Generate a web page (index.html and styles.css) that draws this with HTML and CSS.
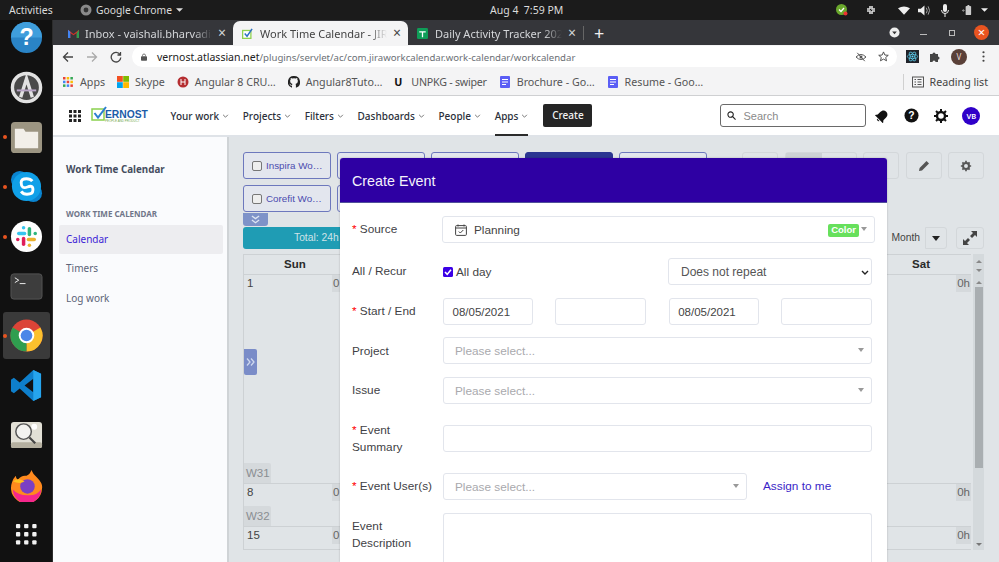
FILE: index.html
```html
<!DOCTYPE html>
<html lang="en">
<head>
<meta charset="utf-8">
<title>Work Time Calendar</title>
<link rel="stylesheet" href="styles.css">
</head>
<body>
<header class="topbar">
  <span class="activities">Activities</span>
  <span class="appmenu"><svg class="chrome-mono" viewBox="0 0 12 12"><circle cx="6" cy="6" r="5.5" fill="#8a8a8a"/><circle cx="6" cy="6" r="2.4" fill="#333"/></svg>Google Chrome<svg class="caret" viewBox="0 0 8 4"><path d="M0 0h8L4 4z" fill="#ddd"/></svg></span>
  <span class="clock">Aug 4&nbsp;&nbsp;7:59 PM</span>
  <span class="tray">
    <svg class="t1" viewBox="0 0 14 14"><circle cx="6.5" cy="6.5" r="5.5" fill="#6aa82c"/><path d="M4 6.5l2 2 3-3.500" stroke="#fff" fill="none" stroke-width="1.300"/><circle cx="10.500" cy="10.500" r="2" fill="#e33"/></svg>
    <svg class="t2" viewBox="0 0 12 12"><path d="M2 5h3M7 7h3M5 2v3M7 7v3M7 2v3h3M2 7h3v3" stroke="#ddd" stroke-width="1.600" fill="none"/></svg>
    <svg class="t3" viewBox="0 0 14 10"><path d="M0 2.500Q7-2 14 2.500L7 10z" fill="#eee"/></svg>
    <svg class="t4" viewBox="0 0 13 11"><path d="M0 3.500h3L7 0v11L3 7.500H0z" fill="#eee"/><path d="M9 2.500Q11 5.500 9 8.500M11 1Q14 5.500 11 10" stroke="#aaa" fill="none"/></svg>
    <svg class="t5" viewBox="0 0 8 13"><rect x="2" width="4" height="8" rx="2" fill="#eee"/><path d="M.5 6q0 3.500 3.500 3.500T7.500 6M4 9.500V13" stroke="#eee" fill="none"/></svg>
    <svg class="t6" viewBox="0 0 13 12"><rect x="5" y="1" width="6" height="10" rx="1" fill="#ccc"/><rect x="7" width="2" height="2" fill="#ccc"/><path d="M1 6h3M2.500 4.500v3" stroke="#888"/></svg>
    <svg class="t7" viewBox="0 0 8 4"><path d="M0 0h8L4 4z" fill="#eee"/></svg>
  </span>
</header>
<div class="desktop">
  <nav class="dock">
    <div class="dock-item"><svg viewBox="0 0 34 34"><circle cx="17" cy="17" r="16" fill="#2a84c6"/><path d="M1 17a16 16 0 0 1 32 0z" fill="#3f9edc"/><text x="17" y="25" class="dock-q">?</text></svg></div>
    <div class="dock-item"><svg viewBox="0 0 34 34"><circle cx="17" cy="17" r="14.500" fill="#4a4a4a" stroke="#e2e2e2" stroke-width="3.500"/><path d="M11 27L17 8l6 19" stroke="#e2e2e2" stroke-width="3.500" fill="none"/><path d="M7 20h20" stroke="#b9a5c7" stroke-width="2"/></svg></div>
    <div class="dock-item dot"><svg viewBox="0 0 34 34"><rect x="1" y="1" width="32" height="32" rx="4" fill="#9c9582"/><path d="M5 8h9l2 3h13v17H5z" fill="#f2efe9"/></svg></div>
    <div class="dock-item dot"><svg viewBox="0 0 34 34"><circle cx="10" cy="10" r="9" fill="#0a84d0"/><circle cx="24" cy="24" r="9" fill="#0a84d0"/><circle cx="17" cy="17" r="15" fill="#10a0e8"/><path d="M23 11.500q-2-2.500-6-2.500-5.500 0-5.500 4 0 7 6.500 4.500t5.500 4q0 3.500-6 3.500-4 0-6-3" stroke="#fff" stroke-width="3" fill="none"/></svg></div>
    <div class="dock-item dot"><svg viewBox="0 0 34 34"><circle cx="17" cy="17" r="16" fill="#fff"/><g stroke-width="3.600" stroke-linecap="round"><path d="M9 14h6" stroke="#36c5f0"/><path d="M14 8v0" stroke="#36c5f0"/><path d="M20 9v6" stroke="#2eb67d"/><path d="M26 14v0" stroke="#2eb67d"/><path d="M19 20h6" stroke="#ecb22e"/><path d="M20 26v0" stroke="#ecb22e"/><path d="M14 19v6" stroke="#e01e5a"/><path d="M8 20v0" stroke="#e01e5a"/></g></svg></div>
    <div class="dock-item"><svg viewBox="0 0 34 34"><rect x="1" y="4" width="32" height="26" rx="3" fill="#3d3d3d" stroke="#555"/><path d="M5 8l4 2.500-4 2.500" stroke="#eee" fill="none"/><path d="M10 14h6" stroke="#eee"/></svg></div>
    <div class="dock-item dock-active dot"><svg viewBox="0 0 34 34"><circle cx="17" cy="17" r="16.500" fill="#db4437"/><path d="M17 17L31.300 8.700A16.500 16.500 0 0 1 17 33.500z" fill="#fbc02d"/><path d="M17 17L17 33.500A16.500 16.500 0 0 1 2.700 8.700z" fill="#2f9e4f"/><circle cx="17" cy="17" r="8" fill="#fff"/><circle cx="17" cy="17" r="6" fill="#4a86e8"/></svg></div>
    <div class="dock-item"><svg viewBox="0 0 34 34"><path d="M24 1l8 4v24l-8 4-14-13-6 5-3-2v-12l3-2 6 5z" fill="#0e7fcb"/><path d="M24 10v14l-9-7z" fill="#111"/><path d="M24 1l8 4v24l-8 4z" fill="#26a5ee"/></svg></div>
    <div class="dock-item"><svg viewBox="0 0 34 34"><rect x="1" y="3" width="32" height="27" rx="3" fill="#e2e0d6"/><rect x="1" y="24" width="32" height="6" rx="2" fill="#b5b0a0"/><circle cx="14" cy="13" r="8" fill="#f3f3f0" stroke="#555" stroke-width="1.500"/><path d="M20 19l6 6" stroke="#444" stroke-width="2.200"/><circle cx="25" cy="8" r="3" fill="#fff"/></svg></div>
    <div class="dock-item"><svg viewBox="0 0 34 34"><path d="M22 1q2 5 6 8 6 6 5 11a16 16 0 1 1-31-6q1-4 4-7 0 3 2 4 4-5 9-4 4-2 5-6z" fill="#ff8a1e"/><path d="M3 21a14.500 14.500 0 0 0 29 0q-5 7-14 6-10 0-15-6z" fill="#f5278c"/><circle cx="18" cy="18" r="7.500" fill="#7b3fc4"/><path d="M3 13q5-5 12 0-5 3-12 0z" fill="#ffc21e"/></svg></div>
    <div class="dock-item"><svg class="dock-grid" viewBox="0 0 24 24"><g fill="#f2f2f2"><rect x="1" y="1" width="4.500" height="4.500" rx="1"/><rect x="9.500" y="1" width="4.500" height="4.500" rx="1"/><rect x="18" y="1" width="4.500" height="4.500" rx="1"/><rect x="1" y="9.500" width="4.500" height="4.500" rx="1"/><rect x="9.500" y="9.500" width="4.500" height="4.500" rx="1"/><rect x="18" y="9.500" width="4.500" height="4.500" rx="1"/><rect x="1" y="18" width="4.500" height="4.500" rx="1"/><rect x="9.500" y="18" width="4.500" height="4.500" rx="1"/><rect x="18" y="18" width="4.500" height="4.500" rx="1"/></g></svg></div>
  </nav>

  <div class="browser">
    <div class="tabstrip">
      <div class="tab tab-first"><svg class="tabicon" viewBox="0 0 12 10"><path d="M0 10V1l6 4.500L12 1v9h-2.500V4.500L6 7 2.500 4.500V10z" fill="#d93025"/><path d="M9.500 10V4.500L12 1v9z" fill="#2f9e4f"/><path d="M0 10V1l2.500 2v7z" fill="#4285f4"/></svg><span class="tabtitle">Inbox - vaishali.bharvadia</span><span class="tabx">×</span></div>
      <div class="tab tab-active"><svg class="tabicon" viewBox="0 0 12 12"><rect x=".7" y="2.700" width="9" height="8.600" fill="#fff" stroke="#8fd14f" stroke-width="1.400"/><path d="M3 6l2.500 3L11 1" stroke="#2d6fc4" stroke-width="1.600" fill="none"/></svg><span class="tabtitle">Work Time Calendar - JIRA</span><span class="tabx">×</span></div>
      <div class="tab"><svg class="tabicon" viewBox="0 0 12 12"><rect width="12" height="12" rx="1.500" fill="#0f9d58"/><path d="M2.500 3.500h7v1.400H6.700V10H5.300V4.900H2.500z" fill="#fff"/></svg><span class="tabtitle">Daily Activity Tracker 2021</span><span class="tabx">×</span></div>
      <span class="tabsep"></span>
      <span class="newtab">+</span>
      <span class="winbtns">
        <svg class="win-menu" viewBox="0 0 12 12"><circle cx="6" cy="6" r="5.500" fill="#eee"/><path d="M3.500 5h5L6 8z" fill="#333"/></svg>
        <span class="win-min"></span>
        <span class="win-max"></span>
        <span class="win-close">×</span>
      </span>
    </div>
    <div class="toolbar">
      <svg class="navbtn" viewBox="0 0 12 12"><path d="M11 6H2M6 1.500L1.500 6 6 10.500" stroke="#444" stroke-width="1.300" fill="none"/></svg>
      <svg class="navbtn" viewBox="0 0 12 12"><path d="M1 6h9M6 1.500L10.500 6 6 10.500" stroke="#aaa" stroke-width="1.300" fill="none"/></svg>
      <svg class="navbtn" viewBox="0 0 12 12"><path d="M10 3.500A4.800 4.800 0 1 0 10.800 6.500M10.500 1v3h-3" stroke="#444" stroke-width="1.300" fill="none"/></svg>
      <div class="omnibox">
        <svg class="lock" viewBox="0 0 8 10"><rect y="4" width="8" height="6" rx="1" fill="#555"/><path d="M2 4V3a2 2 0 0 1 4 0v1" stroke="#555" fill="none"/></svg>
        <span class="url"><b>vernost.atlassian.net</b>/plugins/servlet/ac/com.jiraworkcalendar.work-calendar/workcalendar</span>
        <svg class="omni-eye" viewBox="0 0 14 12"><path d="M1 6q6-6 12 0-6 6-12 0z" fill="none" stroke="#555" stroke-width="1.200"/><circle cx="7" cy="6" r="1.800" fill="#555"/><path d="M2.500 1l9 10" stroke="#555" stroke-width="1.200"/></svg>
        <svg class="omni-star" viewBox="0 0 12 12"><path d="M6 1l1.500 3.400 3.700.3-2.800 2.400.9 3.600L6 8.800l-3.300 1.900.9-3.600L.8 4.700l3.700-.3z" fill="none" stroke="#444"/></svg>
      </div>
      <svg class="ext-react" viewBox="0 0 14 14"><rect width="14" height="14" fill="#20232a"/><g fill="none" stroke="#61dafb" stroke-width=".7"><ellipse cx="7" cy="7" rx="5.500" ry="2.200"/><ellipse cx="7" cy="7" rx="5.500" ry="2.200" transform="rotate(60 7 7)"/><ellipse cx="7" cy="7" rx="5.500" ry="2.200" transform="rotate(120 7 7)"/></g><circle cx="7" cy="7" r="1.100" fill="#61dafb"/></svg>
      <svg class="ext-puzzle" viewBox="0 0 12 12"><path d="M1 3h2.500a1.500 1.500 0 0 1 3 0H9v2.500a1.500 1.500 0 0 1 0 3V11H6.500a1.500 1.500 0 0 0-3 0H1z" fill="#444"/></svg>
      <span class="avatar-v">V</span>
      <svg class="kebab" viewBox="0 0 3 13"><circle cx="1.500" cy="1.500" r="1.300" fill="#444"/><circle cx="1.500" cy="6.500" r="1.300" fill="#444"/><circle cx="1.500" cy="11.500" r="1.300" fill="#444"/></svg>
    </div>
    <div class="bookmarks">
      <span class="bm"><svg class="bm-ico" viewBox="0 0 10 10"><g><rect width="2.500" height="2.500" fill="#ea4335"/><rect x="3.700" width="2.500" height="2.500" fill="#fbbc05"/><rect x="7.400" width="2.500" height="2.500" fill="#34a853"/><rect y="3.700" width="2.500" height="2.500" fill="#4285f4"/><rect x="3.700" y="3.700" width="2.500" height="2.500" fill="#ea4335"/><rect x="7.400" y="3.700" width="2.500" height="2.500" fill="#fbbc05"/><rect y="7.400" width="2.500" height="2.500" fill="#34a853"/><rect x="3.700" y="7.400" width="2.500" height="2.500" fill="#4285f4"/><rect x="7.400" y="7.400" width="2.500" height="2.500" fill="#ea4335"/></g></svg>Apps</span>
      <span class="bm"><svg class="bm-ico bm-lg" viewBox="0 0 12 12"><rect width="5.800" height="5.800" fill="#f25022"/><rect x="6.200" width="5.800" height="5.800" fill="#7fba00"/><rect y="6.200" width="5.800" height="5.800" fill="#00a4ef"/><rect x="6.200" y="6.200" width="5.800" height="5.800" fill="#ffb900"/></svg>Skype</span>
      <span class="bm"><svg class="bm-ico bm-lg" viewBox="0 0 12 12"><circle cx="6" cy="6" r="5.500" fill="#b52e31"/><path d="M4 3v6M8 3v6M4 6h4" stroke="#fff"/></svg>Angular 8 CRU…</span>
      <span class="bm"><svg class="bm-ico bm-lg" viewBox="0 0 12 12"><path d="M6 0a6 6 0 0 0-2 11.700V9.500Q2.500 10 2 8.700 1.800 8 1.200 7.700 2 7.400 2.600 8.400q.6.800 1.500.4 0-.6.400-.9-2.400-.3-2.400-2.900 0-1 .6-1.600-.2-.8.100-1.500.7-.1 1.700.6a5 5 0 0 1 3 0q1-.7 1.700-.6.300.7.100 1.500.6.600.6 1.600 0 2.600-2.400 2.900.4.400.4 1.100v2.700A6 6 0 0 0 6 0z" fill="#222"/></svg>Angular8Tuto…</span>
      <span class="bm bm-tight"><b class="bm-u">U</b>UNPKG - swiper</span>
      <span class="bm"><svg class="bm-ico bm-lg" viewBox="0 0 12 12"><rect x="1" width="10" height="12" rx="1" fill="#5b5ef5"/><path d="M3 3.500h6M3 6h6M3 8.500h4" stroke="#fff"/></svg>Brochure - Go…</span>
      <span class="bm"><svg class="bm-ico bm-lg" viewBox="0 0 12 12"><rect x="1" width="10" height="12" rx="1" fill="#5b5ef5"/><path d="M3 3.500h6M3 6h6M3 8.500h4" stroke="#fff"/></svg>Resume - Goo…</span>
      <span class="readlist"><svg class="bm-ico bm-lg" viewBox="0 0 12 12"><rect x=".5" y="1" width="11" height="10" fill="none" stroke="#555"/><path d="M2.500 3.500h1.500M2.500 6h1.500M2.500 8.500h1.500M5.500 3.500h4M5.500 6h4M5.500 8.500h4" stroke="#555"/></svg>Reading list</span>
    </div>

    <div class="page">
      <div class="jiranav">
        <svg class="nav-grid" viewBox="0 0 12 12"><g fill="#222"><rect width="3" height="3"/><rect x="4.500" width="3" height="3"/><rect x="9" width="3" height="3"/><rect y="4.500" width="3" height="3"/><rect x="4.500" y="4.500" width="3" height="3"/><rect x="9" y="4.500" width="3" height="3"/><rect y="9" width="3" height="3"/><rect x="4.500" y="9" width="3" height="3"/><rect x="9" y="9" width="3" height="3"/></g></svg>
        <span class="logo"><svg class="logo-check" viewBox="0 0 16 15"><rect x="1" y="3" width="12" height="11" fill="#fff" stroke="#8bd14f" stroke-width="1.500"/><path d="M3.500 7l3.500 4.500L15 1" stroke="#2d7fd0" stroke-width="2" fill="none"/></svg><span class="logo-text"><b>ERNOST</b><i>PEOPLE AND PRODUCT</i></span></span>
        <span class="navlink">Your work<svg class="chev" viewBox="0 0 8 5"><path d="M1 1l3 3 3-3" stroke="#555" fill="none"/></svg></span>
        <span class="navlink">Projects<svg class="chev" viewBox="0 0 8 5"><path d="M1 1l3 3 3-3" stroke="#555" fill="none"/></svg></span>
        <span class="navlink">Filters<svg class="chev" viewBox="0 0 8 5"><path d="M1 1l3 3 3-3" stroke="#555" fill="none"/></svg></span>
        <span class="navlink">Dashboards<svg class="chev" viewBox="0 0 8 5"><path d="M1 1l3 3 3-3" stroke="#555" fill="none"/></svg></span>
        <span class="navlink">People<svg class="chev" viewBox="0 0 8 5"><path d="M1 1l3 3 3-3" stroke="#555" fill="none"/></svg></span>
        <span class="navlink navlink-active">Apps<svg class="chev" viewBox="0 0 8 5"><path d="M1 1l3 3 3-3" stroke="#555" fill="none"/></svg></span>
        <span class="createbtn">Create</span>
        <span class="searchbox"><svg class="search-ico" viewBox="0 0 10 10"><circle cx="4" cy="4" r="3" fill="none" stroke="#222" stroke-width="1.200"/><path d="M6.300 6.300L9.500 9.500" stroke="#222" stroke-width="1.300"/></svg>Search</span>
        <svg class="ni ni-bell" viewBox="0 0 14 14"><g transform="rotate(45 7 7)"><path d="M7 1C4.300 1 3 3.200 3 5.500V9L1 11.500h12L11 9V5.500C11 3.200 9.700 1 7 1z" fill="#111"/><path d="M5.300 12.300a1.800 1.800 0 0 0 3.400 0z" fill="#111"/></g></svg>
        <svg class="ni ni-help" viewBox="0 0 16 16"><circle cx="8" cy="8" r="7.500" fill="#111"/><text x="8" y="12" class="ni-q">?</text></svg>
        <svg class="ni ni-gear" viewBox="0 0 14 14"><circle cx="7" cy="7" r="4" fill="none" stroke="#111" stroke-width="2.400"/><g stroke="#111" stroke-width="2"><path d="M7 0v2.500M7 11.500V14M0 7h2.500M11.500 7H14M2 2l1.800 1.800M10.200 10.200L12 12M2 12l1.800-1.800M10.200 3.800L12 2"/></g></svg>
        <span class="ni-user">VB</span>
      </div>
      <div class="workspace">
        <aside class="sidebar">
          <div class="side-title">Work Time Calendar</div>
          <div class="side-head">WORK TIME CALENDAR</div>
          <div class="side-item side-item-active">Calendar</div>
          <div class="side-item">Timers</div>
          <div class="side-item">Log work</div>
        </aside>
        <main class="content">
          <div class="topcontrols">
            <div class="chips">
              <span class="chip"><i class="cb"></i>Inspira Wo…</span>
              <span class="chip"></span>
              <span class="chip"></span>
              <span class="chip chip-dark"></span>
              <span class="chip"></span>
              <span class="chip"><i class="cb"></i>Corefit Wo…</span>
              <span class="chip chip-narrow"></span>
            </div>
            <div class="tools">
              <span class="tool"></span>
              <span class="tool tool-split"><i></i><i></i></span>
              <span class="tool"></span>
              <span class="tool"><svg class="tool-ico" viewBox="0 0 12 12"><path d="M1 11l.6-3L8.500 1l2.500 2.500L4 10.400z" fill="#555"/></svg></span>
              <span class="tool"><svg class="tool-ico" viewBox="0 0 14 14"><circle cx="7" cy="7" r="3.500" fill="none" stroke="#555" stroke-width="2.400"/><g stroke="#555" stroke-width="2"><path d="M7 1v2M7 11v2M1 7h2M11 7h2M2.800 2.800l1.400 1.400M9.800 9.800l1.400 1.400M2.800 11.200l1.400-1.400M9.800 4.200l1.400-1.400"/></g></svg></span>
            </div>
          </div>
          <div class="expander"><svg class="exp-ico" viewBox="0 0 10 9"><path d="M1 .5l4 3 4-3M1 5l4 3 4-3" stroke="#dfe6f3" stroke-width="1.400" fill="none"/></svg></div>
          <div class="totalrow">
            <div class="totalbar">Total: 24h</div>
            <div class="viewsel"><span class="viewmonth">Month</span><span class="viewcaret"><i></i></span></div>
            <span class="fullscr"><svg class="full-ico" viewBox="0 0 16 16"><path d="M9 1h6v6l-2-2-3 3-2-2 3-3zM7 15H1V9l2 2 3-3 2 2-3 3z" fill="#444"/></svg></span>
          </div>
          <div class="calendar">
            <div class="cal-grid">
              <div class="cal-head"><span>Sun</span><span>Sat</span></div>
              <div class="week week-1"><div class="week-top"><span class="dnum">1</span><span class="hrs hrs-a">0</span><span class="hrs hrs-b">0h</span></div><span class="wk">W31</span></div>
              <div class="week week-2"><div class="week-top"><span class="dnum">8</span><span class="hrs hrs-a">0</span><span class="hrs hrs-b">0h</span></div><span class="wk">W32</span></div>
              <div class="week week-3"><div class="week-top"><span class="dnum">15</span><span class="hrs hrs-a">0</span><span class="hrs hrs-b">0h</span></div></div>
              <span class="sidepull"><svg class="pull-ico" viewBox="0 0 9 8"><path d="M1 .5L4 4 1 7.500M5 .5L8 4 5 7.500" stroke="#cfd8ee" stroke-width="1.300" fill="none"/></svg></span>
            </div>
            <div class="scrolltrack"><i class="sb-up"></i><i class="sb-down"></i><i class="sb-up sb-up2"></i><span class="thumb"></span><i class="sb-end"></i></div>
          </div>
        </main>
      </div>

      <section class="modal">
        <h2 class="modal-head">Create Event</h2>
        <form class="modal-form">
          <div class="row"><label class="lbl"><em>*</em> Source</label><div class="field fld-source"><svg class="cal-ico" viewBox="0 0 12 12"><rect x=".6" y="1.600" width="10.800" height="9.800" rx="1" fill="none" stroke="#444"/><path d="M.6 4h10.800M3 .5v2M9 .5v2" stroke="#444"/><path d="M3.800 7.500l1.500 1.500 3-3" stroke="#444" fill="none"/></svg>Planning<span class="colorpill">Color</span><i class="tri"></i></div></div>
          <div class="row row-all"><label class="lbl">All / Recur</label><div class="split"><span class="allday"><i class="check"><svg viewBox="0 0 10 10"><path d="M2 5l2.200 2.400L8 2.800" stroke="#fff" stroke-width="1.600" fill="none"/></svg></i>All day</span><div class="field fld-select">Does not repeat<svg class="selchev" viewBox="0 0 8 5"><path d="M1 1l3 3 3-3" stroke="#222" stroke-width="1.400" fill="none"/></svg></div></div></div>
          <div class="row"><label class="lbl"><em>*</em> Start / End</label><div class="dates"><div class="field fld-date">08/05/2021</div><div class="field"></div><div class="field fld-date">08/05/2021</div><div class="field"></div></div></div>
          <div class="row row-project"><label class="lbl">Project</label><div class="field fld-ph">Please select...<i class="tri"></i></div></div>
          <div class="row"><label class="lbl">Issue</label><div class="field fld-ph">Please select...<i class="tri"></i></div></div>
          <div class="row row-summary"><label class="lbl"><em>*</em> Event Summary</label><div class="field"></div></div>
          <div class="row row-users"><label class="lbl"><em>*</em> Event User(s)</label><div class="field fld-ph">Please select...<i class="tri"></i></div><a class="assign">Assign to me</a></div>
          <div class="row"><label class="lbl">Event Description</label><div class="field fld-area"></div></div>
        </form>
      </section>
    </div>
  </div>
</div>
</body>
</html>
```

FILE: styles.css
```css
* { box-sizing: border-box; }
html, body { margin: 0; width: 999px; height: 562px; overflow: hidden; }
body { font-family: "Noto Sans", sans-serif; background: #111; display: flex; flex-direction: column; }
svg { display: block; flex: none; }

/* GNOME top bar */
.topbar { height: 20px; background: #1b1b1b; color: #dcdcdc; font-size: 10.500px; display: flex; align-items: center; flex: none; position: relative; z-index: 2; }
.activities { margin-left: 9px; width: 71px; }
.appmenu { display: flex; align-items: center; font-size: 10.300px; }
.chrome-mono { width: 12px; height: 12px; margin-right: 4px; }
.caret { width: 7px; height: 4px; margin-left: 4px; }
.clock { position: absolute; left: 490px; top: 3px; line-height: 14px; }
.tray { margin-left: auto; display: flex; align-items: center; }
.t1 { width: 14px; height: 14px; }
.t2 { width: 12px; height: 12px; margin-left: 16px; }
.t3 { width: 12px; height: 9px; margin-left: 21px; }
.t4 { width: 12px; height: 11px; margin-left: 8px; }
.t5 { width: 8px; height: 13px; margin-left: 11px; }
.t6 { width: 12px; height: 11px; margin-left: 12px; }
.t7 { width: 7px; height: 4px; margin-left: 8px; margin-right: 11px; }

.desktop { flex: 1; display: flex; min-height: 0; }

/* Dock */
.dock { width: 53px; flex: none; background: #111; display: flex; flex-direction: column; align-items: center; border-right: 1px solid #2c2c2c; }
.dock-item { width: 47px; height: 49.700px; flex: none; display: flex; align-items: center; justify-content: center; position: relative; }
.dock-item:first-child { margin-top: -7px; }
.dock-item svg { width: 33px; height: 33px; }
.dock-item svg.dock-grid { width: 23px; height: 23px; }
.dock-active { background: #3a3a3a; border-radius: 3px; height: 47px; margin: 1.350px 0; }
.dot::before { content: ""; position: absolute; left: 0; top: 50%; margin-top: -2px; width: 4px; height: 4px; border-radius: 50%; background: #e95420; }
.dock-q { font: 700 24px "Liberation Sans", sans-serif; fill: #fff; text-anchor: middle; }

/* Browser chrome */
.browser { flex: 1; min-width: 0; display: flex; flex-direction: column; position: relative; }
.tabstrip { height: 25px; flex: none; background: #35363a; display: flex; align-items: flex-end; font-size: 11px; color: #d4d6d9; }
.tab { width: 175px; height: 24px; display: flex; align-items: center; padding: 0 4px 0 9px; flex: none; }
.tab-first { width: 180px; padding-left: 15px; }
.tab-first .tabicon { margin-right: 6px; }
.tab-active { background: #f4f4f5; color: #444; border-radius: 7px 7px 0 0; }
.tabicon { width: 11px; height: 11px; margin-right: 7px; }
.tabtitle { flex: 1; min-width: 0; overflow: hidden; white-space: nowrap; -webkit-mask-image: linear-gradient(to left, transparent, #000 18px); mask-image: linear-gradient(to left, transparent, #000 18px); }
.tabx { width: 14px; text-align: center; font-size: 14px; line-height: 14px; margin-left: 3px; }
.tabsep { width: 1px; height: 14px; background: #666; align-self: center; }
.newtab { font-size: 18px; line-height: 22px; margin-left: 10px; color: #eee; align-self: center; }
.winbtns { margin-left: auto; display: flex; align-items: center; align-self: center; }
.win-menu { width: 11px; height: 11px; }
.win-min { width: 7px; height: 1px; background: #bbb; margin-left: 20px; margin-top: 3px; }
.win-max { width: 6px; height: 6px; border: 1px solid #bbb; margin-left: 22px; }
.win-close { width: 15px; height: 15px; border-radius: 50%; background: #e95420; color: #fff; text-align: center; font-size: 13px; line-height: 14px; margin-left: 19px; margin-right: 10px; }

.toolbar { height: 23px; flex: none; background: #f4f4f5; display: flex; align-items: center; padding-left: 9px; }
.navbtn { width: 12px; height: 12px; margin-right: 12px; }
.omnibox { margin-left: -2px; width: 765px; height: 21px; background: #fff; border-radius: 11px; display: flex; align-items: center; padding-left: 9px; font-size: 9.600px; color: #6b6f75; flex: none; }
.lock { width: 6px; height: 8px; margin-right: 10px; }
.url { white-space: nowrap; flex: 1; }
.url b { font-weight: 400; color: #222; font-size: 10.500px; }
.omni-eye { width: 12px; height: 10px; margin-right: 11px; }
.omni-star { width: 11px; height: 11px; margin-right: 8px; }
.ext-react { width: 13px; height: 13px; margin-left: 9px; }
.ext-puzzle { width: 12px; height: 12px; margin-left: 10px; }
.avatar-v { width: 16px; height: 16px; border-radius: 50%; background: #5a4038; color: #e8dcd8; font-size: 8px; line-height: 16px; text-align: center; margin-left: 10px; flex: none; }
.kebab { width: 3px; height: 11px; margin-left: 15px; }

.bookmarks { height: 28px; flex: none; background: #f4f4f5; border-bottom: 1px solid #cfd0d2; display: flex; align-items: center; padding-left: 10px; font-size: 10.700px; color: #555; }
.bm { display: flex; align-items: center; margin-right: 12px; white-space: nowrap; }
.bm-tight { letter-spacing: -.25px; }
.bm-ico { width: 10px; height: 10px; margin-right: 7px; }
.bm-lg { width: 12px; height: 12px; margin-right: 6px; }
.bm-u { font-weight: 700; color: #111; width: 11px; margin-right: 6px; }
.readlist { margin-left: auto; margin-right: 11px; display: flex; align-items: center; border-left: 1px solid #d0d0d0; padding-left: 8px; color: #444; height: 16px; }

/* Page */
.page { flex: 1; min-height: 0; display: flex; flex-direction: column; position: relative; background: #e0e4e7; }
.jiranav { height: 41px; flex: none; background: #fff; border-bottom: 2px solid #dfe3e8; display: flex; align-items: center; padding-left: 16px; font-size: 10px; font-weight: 500; color: #2b2f3a; }
.nav-grid { width: 12px; height: 12px; margin-right: 10px; }
.logo { display: flex; align-items: flex-start; width: 66px; margin-top: -2px; }
.logo-check { width: 16px; height: 15px; margin-top: -1px; }
.logo-text { display: flex; flex-direction: column; margin-left: -2px; }
.logo-text b { font: 700 10.300px/11px "Liberation Sans", sans-serif; color: #1c5ca8; margin-top: 2px; }
.logo-text i { font: 400 3px/3px "Liberation Sans", sans-serif; color: #75a94f; }
.navlink { display: flex; align-items: center; height: 39px; margin-left: 13.600px; white-space: nowrap; position: relative; }
.navlink:first-of-type { margin-left: 13px; }
.chev { width: 7px; height: 4px; margin-left: 3px; }
.navlink-active::after { content: ""; position: absolute; left: 0; right: 0; bottom: -1px; height: 2px; background: #2b2b2b; }
.createbtn { margin-left: 15px; width: 49px; height: 23px; background: #252525; color: #f2f2f2; border-radius: 2px; text-align: center; line-height: 23px; }
.searchbox { margin-left: 128px; width: 146px; height: 23px; border: 1.500px solid #6a6a6a; border-radius: 3px; display: flex; align-items: center; padding-left: 6px; font: 400 11px "Liberation Sans", sans-serif; color: #8a8a8a; }
.search-ico { width: 9px; height: 9px; margin-right: 7px; }
.ni { width: 14px; height: 14px; margin-left: 15px; }
.ni-bell { width: 14px; height: 14px; margin-left: 9px; }
.ni-help { width: 15px; height: 15px; margin-left: 15px; }
.ni-gear { margin-left: 15px; }
.ni-q { font: 700 11px "Liberation Sans", sans-serif; fill: #fff; text-anchor: middle; }
.ni-user { width: 18px; height: 18px; border-radius: 50%; background: #2f00c9; color: #fff; text-align: center; font-size: 7.500px; line-height: 18px; margin-left: 14px; font-weight: 600; }

.workspace { flex: 1; min-height: 0; display: flex; }
.sidebar { width: 176px; flex: none; background: #fafbfd; border-right: 2px solid #cfd3d6; padding: 26px 6px 0 6px; color: #5c6478; font-size: 10px; }
.side-title { font-weight: 700; color: #454d60; padding-left: 7px; margin-bottom: 31px; line-height: 14px; font-size: 9.800px; }
.side-head { font-size: 8px; font-weight: 700; color: #707689; padding-left: 7px; line-height: 12px; margin-bottom: 5px; }
.side-item { height: 29.300px; padding-left: 7px; line-height: 29px; width: 164px; border-radius: 2px; }
.side-item-active { background: #ededf0; color: #3d1ed6; }

.content { flex: 1; min-width: 0; padding: 15px 15px 0 14px; font-family: "Liberation Sans", sans-serif; }
.topcontrols { display: flex; justify-content: space-between; align-items: flex-start; }
.chips { display: grid; grid-template-columns: repeat(5, 88px); gap: 6px; width: 464px; }
.chip { height: 27px; border: 1.500px solid #6d78bd; border-radius: 3px; background: #e3e6ee; display: flex; align-items: center; padding-left: 8px; font-size: 9.800px; color: #4b4cae; white-space: nowrap; }
.chip-dark { background: #2b3591; border-color: #2b3591; }
.cb { width: 10px; height: 10px; border: 1px solid #777; border-radius: 2px; background: #eee; margin-right: 4px; flex: none; }
.tools { display: flex; justify-content: space-between; width: 242px; margin-left: auto; }
.tool { width: 36px; height: 27px; border: 1.500px solid #d3d7da; border-radius: 3px; display: flex; align-items: center; justify-content: center; }
.tool-split { width: 72px; align-items: stretch; justify-content: flex-start; }
.tool-split i:first-child { width: 36px; background: #cdd2d5; }
.tool-ico { width: 12px; height: 12px; }
.expander { width: 25px; height: 13px; margin-top: 1px; background: #7e92c8; border-radius: 0 0 3px 3px; display: flex; align-items: center; justify-content: center; }
.exp-ico { width: 9px; height: 9px; }
.totalrow { display: flex; align-items: center; margin-top: 1px; height: 22px; }
.totalbar { width: 622px; height: 22px; background: #1f9cb4; border-radius: 3px; color: #cfe3e8; font-size: 10.300px; line-height: 22px; padding-left: 51px; }
.viewsel { margin-left: 20px; display: flex; width: 62px; height: 22px; color: #444; font-size: 10.300px; }
.viewmonth { flex: 1; line-height: 22px; text-align: right; padding-right: 5px; }
.viewcaret { width: 22px; border: 1.500px solid #d3d7da; border-radius: 0 3px 3px 0; display: flex; align-items: center; justify-content: center; }
.viewcaret i { width: 0; height: 0; border: 4px solid transparent; border-top: 5px solid #222; border-bottom: 0; }
.fullscr { width: 28px; height: 22px; border: 1.500px solid #d3d7da; border-radius: 3px; margin-left: 9px; display: flex; align-items: center; justify-content: center; }
.full-ico { width: 16px; height: 16px; }
.calendar { margin-top: 5px; display: flex; height: 296px; }
.cal-grid { flex: 1; position: relative; border: 1px solid #cdd1d4; border-right: 0; }
.cal-head { height: 20px; border-bottom: 1px solid #cdd1d4; display: flex; justify-content: space-between; font-size: 11.500px; font-weight: 700; color: #2a2a2a; line-height: 19px; padding: 0 41px 0 40px; }
.week { border-bottom: 1px solid #cdd1d4; display: flex; flex-direction: column; justify-content: space-between; }
.week-1 { height: 209px; }
.week-2 { height: 43px; }
.week-3 { height: 22px; border-bottom: 0; }
.week-top { display: flex; font-size: 11.500px; line-height: 17px; color: #444; position: relative; }
.dnum { padding: 0 0 0 3px; flex: 1; }
.hrs { background: #d5d9dc; color: #666; padding: 0 1px; position: absolute; top: 0; }
.hrs-a { left: 88px; width: 12px; overflow: hidden; }
.hrs-b { right: 0; }
.wk { width: 27px; height: 20px; background: #d5d9dc; color: #8a8e92; font-size: 11.500px; line-height: 20px; padding-left: 2px; border-radius: 0 2px 0 0; }
.sidepull { position: absolute; left: 0; top: 94px; width: 13px; height: 26px; background: #7a8cc8; border-radius: 0 2px 2px 2px; display: flex; align-items: center; justify-content: center; }
.pull-ico { width: 9px; height: 8px; }
.scrolltrack { width: 11px; background: #d4d9dc; margin-left: 2px; display: flex; flex-direction: column; align-items: center; }
.sb-up, .sb-down, .sb-end { width: 0; height: 0; border: 3px solid transparent; flex: none; }
.sb-up { border-top: 0; border-bottom: 3px solid #888; margin-top: 6px; }
.sb-down { border-bottom: 0; border-top: 3px solid #888; margin-top: 6px; }
.sb-up2 { margin-top: 9px; }
.thumb { width: 8px; height: 181px; background: #a9aeb1; margin-top: 3px; flex: none; }
.sb-end { border-bottom: 0; border-top: 3px solid #777; margin-top: auto; margin-bottom: 4px; }

/* Modal */
.modal { position: absolute; left: 287px; top: 62px; width: 547px; height: 404px; background: #fff; border-radius: 3px 3px 0 0; overflow: hidden; font-family: "Liberation Sans", sans-serif; font-size: 11.800px; color: #444; box-shadow: 0 0 2px rgba(0,0,0,.25); }
.modal-head { margin: 0; height: 45px; background: #2e00a3; color: #f4f2fb; font-size: 14.300px; font-weight: 400; line-height: 46px; padding-left: 12px; border-bottom: 1px solid #50509a; }
.modal-form { padding: 13px 15px 0 12px; display: flex; flex-direction: column; gap: 13px; }
.row { display: grid; grid-template-columns: 91px 1fr; grid-template-rows: 27px; }
.row-all { margin-top: 2px; }
.row-project { margin-top: -1px; }
.row-project .lbl { padding-top: 6px; }
.row-summary { margin-top: 8px; }
.row-summary .lbl { padding-top: 0; margin-top: -3px; }
.row-users { grid-template-columns: 91px 304px 1fr; margin-top: 8px; }
.lbl { line-height: 17px; padding-top: 5px; color: #3f3f46; height: 27px; }
.lbl em { color: #f00; font-style: normal; }
.field { height: 27px; border: 1.500px solid #e2e5ec; border-radius: 3px; background: #fff; display: flex; align-items: center; padding-left: 12px; position: relative; }
.fld-source { margin: 0 -3px 0 -1px; }
.cal-ico { width: 12px; height: 12px; margin-right: 7px; }
.colorpill { margin-left: auto; margin-top: 1px; background: #67e05c; color: #fff; font-size: 9.500px; font-weight: 700; padding: 1.500px 3px; border-radius: 2px; margin-right: 15px; line-height: 10px; }
.tri { position: absolute; right: 7px; top: 10px; width: 0; height: 0; border: 3.500px solid transparent; border-top: 4px solid #999; border-bottom: 0; }
.split { display: flex; justify-content: space-between; align-items: center; }
.allday { display: flex; align-items: center; }
.check { width: 10px; height: 10px; background: #3b00e6; border-radius: 1.500px; margin-right: 3px; }
.fld-select { width: 204px; color: #555; font-size: 12px; }
.selchev { position: absolute; right: 2px; top: 11px; width: 8px; height: 5px; }
.dates { display: grid; grid-template-columns: 90px 91px 90px 91px; justify-content: space-between; }
.fld-date { padding-left: 8.500px; font-size: 11.500px; }
.fld-ph { color: #a9a9ad; padding-left: 11px; }
.assign { color: #3b1fc7; padding: 5px 0 0 16px; line-height: 17px; }
.fld-area { height: 49px; border-bottom: 0; border-radius: 3px 3px 0 0; }
```
